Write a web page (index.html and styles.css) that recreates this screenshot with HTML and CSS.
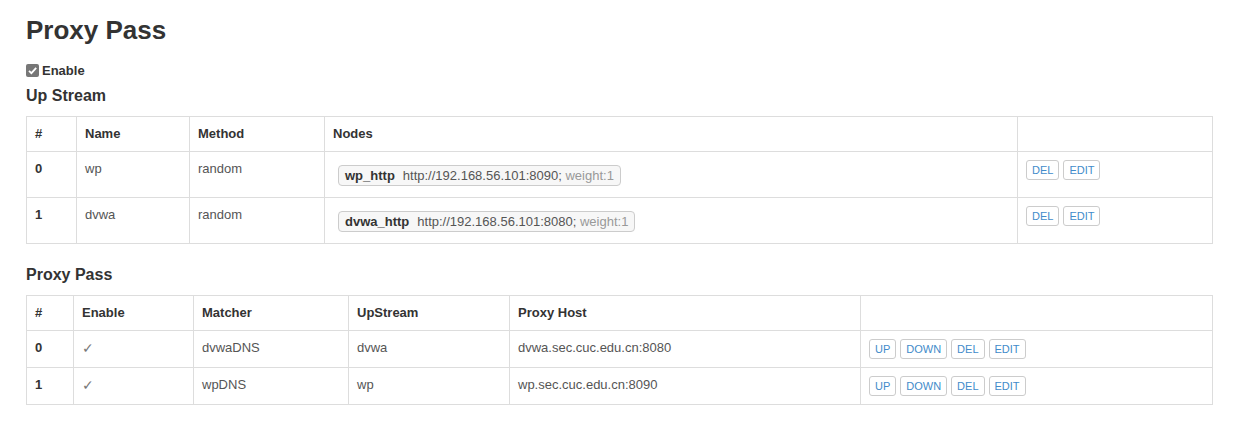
FILE: index.html
```html
<!DOCTYPE html>
<html>
<head>
<meta charset="utf-8">
<link rel="stylesheet" href="styles.css">
</head>
<body>
<div class="page">
  <h1 class="title">Proxy Pass</h1>
  <label class="enable">
    <span class="chk"><svg width="13" height="13" viewBox="0 0 13 13"><rect x="0" y="0" width="13" height="13" rx="2" fill="#777"/><path d="M3 6.8 L5.4 9.2 L10.2 3.8" fill="none" stroke="#fff" stroke-width="1.8"/></svg></span>
    Enable
  </label>
  <h4 class="sub">Up Stream</h4>
  <table class="tbl t1">
    <thead>
      <tr><th class="c1">#</th><th class="c2">Name</th><th class="c3">Method</th><th class="c4">Nodes</th><th class="c5"></th></tr>
    </thead>
    <tbody>
      <tr>
        <td class="idx">0</td><td>wp</td><td>random</td>
        <td><span class="node"><b>wp_http</b>http://192.168.56.101:8090;<span class="w"> weight:1</span></span></td>
        <td><span class="btn">DEL</span><span class="btn">EDIT</span></td>
      </tr>
      <tr>
        <td class="idx">1</td><td>dvwa</td><td>random</td>
        <td><span class="node"><b>dvwa_http</b>http://192.168.56.101:8080;<span class="w"> weight:1</span></span></td>
        <td><span class="btn">DEL</span><span class="btn">EDIT</span></td>
      </tr>
    </tbody>
  </table>
  <h4 class="sub sub2">Proxy Pass</h4>
  <table class="tbl t2">
    <thead>
      <tr><th class="d1">#</th><th class="d2">Enable</th><th class="d3">Matcher</th><th class="d4">UpStream</th><th class="d5">Proxy Host</th><th class="d6"></th></tr>
    </thead>
    <tbody>
      <tr>
        <td class="idx">0</td><td class="ck">✓</td><td>dvwaDNS</td><td>dvwa</td><td>dvwa.sec.cuc.edu.cn:8080</td>
        <td><span class="btn">UP</span><span class="btn">DOWN</span><span class="btn">DEL</span><span class="btn">EDIT</span></td>
      </tr>
      <tr>
        <td class="idx">1</td><td class="ck">✓</td><td>wpDNS</td><td>wp</td><td>wp.sec.cuc.edu.cn:8090</td>
        <td><span class="btn">UP</span><span class="btn">DOWN</span><span class="btn">DEL</span><span class="btn">EDIT</span></td>
      </tr>
    </tbody>
  </table>
</div>
</body>
</html>
```

FILE: styles.css
```css
* { box-sizing: border-box; }
body {
  margin: 0;
  background: #fff;
  font-family: "Liberation Sans", Arial, sans-serif;
  font-size: 13px;
  line-height: 1.42857;
  color: #333;
}
.page {
  padding: 16px 34px 0 26px;
}
.title {
  margin: 0 0 17px 0;
  font-size: 26px;
  line-height: 1.1;
  font-weight: bold;
}
.enable {
  display: flex;
  align-items: center;
  gap: 3px;
  font-weight: bold;
  font-size: 13px;
}
.chk { display: inline-flex; width: 13px; height: 13px; }
.sub {
  margin: 7px 0 11px 0;
  font-size: 16px;
  line-height: 1.1;
  font-weight: bold;
}
.sub2 { margin-top: 22px; margin-bottom: 11px; }
.tbl {
  width: 1186px;
  border-collapse: collapse;
  border: 1px solid #ddd;
  table-layout: fixed;
}
.tbl th, .tbl td {
  border: 1px solid #ddd;
  padding: 8px;
  text-align: left;
  vertical-align: top;
}
.tbl th { font-weight: bold; color: #333; }
.tbl td { color: #555; }
.tbl td.idx { font-weight: bold; color: #333; }
.tbl td.ck { color: #777; font-size: 14px; }
.c1 { width: 50px; } .c2 { width: 113px; } .c3 { width: 135px; } .c4 { width: 693px; } .c5 { width: 195px; }
.d1 { width: 47px; } .d2 { width: 120px; } .d3 { width: 155px; } .d4 { width: 161px; } .d5 { width: 351px; } .d6 { width: 352px; }
.node {
  display: inline-block;
  vertical-align: top;
  margin: 5px 5px 3px 5px;
  padding: 1px 6px;
  border: 1px solid #ccc;
  border-radius: 4px;
  background: #f7f7f7;
  color: #555;
  font-size: 13px;
  line-height: 17px;
}
.node b { color: #333; margin-right: 8px; }
.node .w { color: #999; }
.btn {
  display: inline-block;
  margin-right: 4px;
  padding: 1px 5px;
  border: 1px solid #ccc;
  border-radius: 3px;
  background: #fff;
  color: #428bca;
  font-size: 11px;
  line-height: 16px;
  height: 20px;
  vertical-align: top;
}
```
